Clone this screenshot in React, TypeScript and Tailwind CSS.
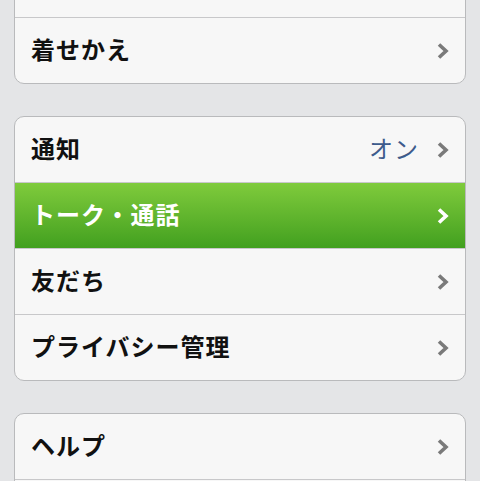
import React from "react";

const font = { fontFamily: '"Noto Sans CJK JP", "Noto Sans", sans-serif' };

function Chevron({ white = false }: { white?: boolean }) {
  return (
    <svg width="14" height="18" viewBox="0 0 14 18" className="shrink-0">
      <polyline
        points="3,2.5 10,9 3,15.5"
        fill="none"
        stroke={white ? "#ffffff" : "#7a7a7a"}
        strokeWidth="3.6"
        strokeLinejoin="miter"
        strokeLinecap="butt"
      />
    </svg>
  );
}

function Row({
  label,
  value,
  active = false,
  top = false,
}: {
  label?: string;
  value?: string;
  active?: boolean;
  top?: boolean;
}) {
  return (
    <div
      className={
        "flex items-center pl-[16px] pr-[15px] " +
        (top ? "h-[65px] " : "h-[66px] border-t border-[#c8c8ca] ") +
        (active
          ? "bg-gradient-to-b from-[#7fcb3c] to-[#41a01f] border-[#6cbb35] text-white"
          : "text-[#111111]")
      }
    >
      <span className="flex-1 pb-[4px] text-[24px] font-bold leading-none tracking-[1px]">{label}</span>
      {value && (
        <span className="mr-[17px] pb-[4px] text-[24px] font-normal leading-none tracking-[1px] text-[#3d5b8c]">
          {value}
        </span>
      )}
      {label && <Chevron white={active} />}
    </div>
  );
}

function Card({ children, className = "" }: { children: React.ReactNode; className?: string }) {
  return (
    <div
      className={
        "overflow-hidden rounded-[10px] border border-[#b9babc] bg-[#f7f7f7] " + className
      }
    >
      {children}
    </div>
  );
}

export default function App() {
  return (
    <div className="h-[481px] w-[480px] overflow-hidden bg-[#e4e5e7] px-[14px]" style={font}>
      <Card className="mt-[-49px]">
        <Row top />
        <Row label="着せかえ" />
      </Card>
      <Card className="mt-[32px]">
        <Row top label="通知" value="オン" />
        <Row label="トーク・通話" active />
        <Row label="友だち" />
        <Row label="プライバシー管理" />
      </Card>
      <Card className="mt-[32px]">
        <Row top label="ヘルプ" />
        <Row />
      </Card>
    </div>
  );
}
